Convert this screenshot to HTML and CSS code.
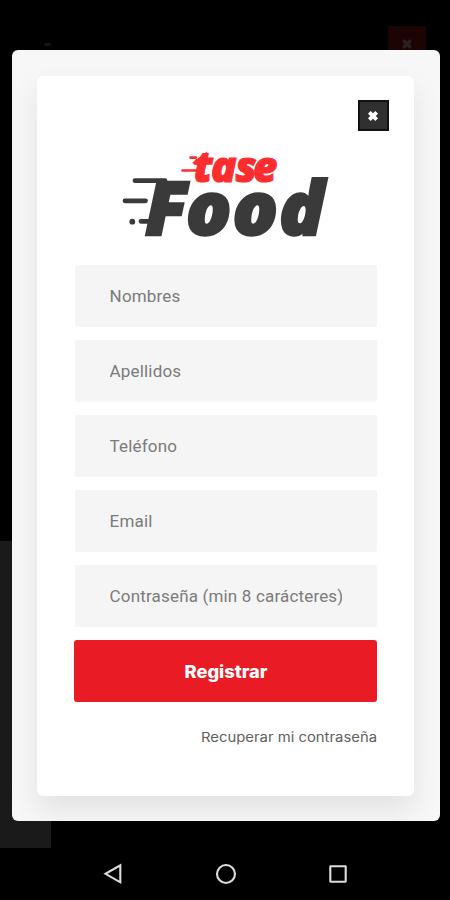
FILE: index.html
```html
<!DOCTYPE html>
<html lang="es">
<head>
<meta charset="utf-8">
<title>Tase Food</title>
<link rel="stylesheet" href="styles.css">
</head>
<body>
<div class="screen">
  <div class="backdrop-panel"></div>
  <div class="backdrop-mark"></div>
  <div class="backdrop-close">
    <svg width="12" height="12" viewBox="0 0 12 12"><path d="M2.3 2.3 9.7 9.7M9.7 2.3 2.3 9.7" stroke="#2c2021" stroke-width="3.4"/></svg>
  </div>
  <main class="modal">
    <form class="card">
      <button class="close" type="button" aria-label="Cerrar">
        <svg width="12" height="12" viewBox="0 0 12 12"><path d="M2.3 2.3 9.7 9.7M9.7 2.3 2.3 9.7" stroke="#fff" stroke-width="3.8"/></svg>
      </button>
      <svg class="logo" viewBox="110 140 230 110" width="230" height="110">
        <g stroke="#3a3a3b" stroke-width="4.8" stroke-linecap="round">
          <path d="M135 180.7H165M125 200.8H145.5M141 221.3H152"/>
        </g>
        <circle cx="132.3" cy="221.7" r="2.9" fill="#3a3a3b"/>
        <text class="food" x="145 186 232.5 279" y="234.5">Food</text>
        <path d="M192 163 207 151.5 205 164 199 166Z" fill="#fc2d2f"/>
        <path d="M190.5 157.6H196M182.5 170.5H197" stroke="#fc2d2f" stroke-width="2.6" stroke-linecap="round"/>
        <text class="tase" x="193.5 211 235.5 253" y="181.5">tase</text>
      </svg>
      <div class="fields">
        <input type="text" placeholder="Nombres">
        <input type="text" placeholder="Apellidos">
        <input type="text" placeholder="Teléfono">
        <input type="text" placeholder="Email">
        <input type="text" placeholder="Contraseña (min 8 carácteres)">
      </div>
      <button class="submit" type="button"><svg width="84" height="26" viewBox="0 0 84 26"><text x="0.5" y="19.5" textLength="83" lengthAdjust="spacingAndGlyphs">Registrar</text></svg></button>
      <a class="recover"><svg width="176" height="22" viewBox="0 0 176 22"><text x="0" y="16.5" textLength="176" lengthAdjust="spacingAndGlyphs">Recuperar mi contraseña</text></svg></a>
    </form>
  </main>
  <nav class="navbar">
    <svg width="22" height="22" viewBox="0 0 22 22"><path d="M18.3 2.3V19.3L3.5 10.8Z"/></svg>
    <svg width="22" height="22" viewBox="0 0 22 22"><circle cx="11" cy="11" r="9"/></svg>
    <svg width="22" height="22" viewBox="0 0 22 22"><rect x="3.3" y="3.3" width="15.4" height="15.4" rx=".4"/></svg>
  </nav>
</div>
</body>
</html>
```
FILE: styles.css
```css
* { box-sizing: border-box; }
body { margin: 0; background: #000; }
svg { display: block; }
.screen {
  position: relative;
  width: 450px;
  height: 900px;
  display: flex;
  flex-direction: column;
  overflow: hidden;
  background: #000;
}
.backdrop-panel {
  position: absolute;
  left: 0;
  top: 541px;
  width: 51px;
  height: 307px;
  background: #1a1a1a;
  border-top-right-radius: 18px;
}
.backdrop-mark {
  position: absolute;
  left: 44px;
  top: 43px;
  width: 7px;
  height: 3px;
  border-radius: 2px;
  background: #151515;
}
.backdrop-close {
  position: absolute;
  left: 388px;
  top: 26px;
  width: 38px;
  height: 38px;
  display: grid;
  place-items: center;
  padding-bottom: 2px;
  background: #1c0405;
}
.modal {
  position: relative;
  width: 428px;
  height: 771px;
  margin: 50px 0 0 11.6px;
  padding: 26px 25px 25px;
  border-radius: 6px;
  background: #f7f7f7;
  overflow: hidden;
}
.card {
  height: 720px;
  width: 377px;
  padding: 24px 37px 0 38px;
  display: flex;
  flex-direction: column;
  border-radius: 6px;
  background: #fff;
  box-shadow: 0 14px 30px rgba(0, 0, 0, .085);
}
.close {
  align-self: flex-end;
  width: 31px;
  height: 31px;
  margin-right: -12px;
  padding: 0;
  display: grid;
  place-items: center;
  border: 2px solid #111;
  background: #303030;
}
.logo { margin: 9px 0 15.4px 35.4px; flex: none; overflow: visible; }
.logo text {
  font-family: "Open Sans", sans-serif;
  font-weight: 800;
  font-style: italic;
}
.food { font-size: 75px; fill: #3a3a3b; stroke: #3a3a3b; stroke-width: 2.4px; }
.tase { font-size: 42px; fill: #fc2d2f; stroke: #fc2d2f; stroke-width: 1.2px; }
.fields { display: grid; gap: 13px; }
input {
  width: 302px;
  height: 62px;
  padding: 0 35px;
  border: 0;
  border-radius: 2px;
  background: #f5f5f5;
  font: 17px Roboto, sans-serif;
  letter-spacing: .17px;
}
input::placeholder { color: #7b7b7b; opacity: 1; }
.submit {
  width: 303px;
  height: 62px;
  margin: 13px 0 0 -.6px;
  padding: 0;
  display: grid;
  place-items: center;
  border: 0;
  border-radius: 3px;
  background: #e91b24;
}
.submit text {
  font: 800 17px Inter, "Open Sans", sans-serif;
  fill: #fff;
}
.recover { align-self: flex-end; margin-top: 23px; }
.recover text {
  font: 400 13px Inter, "Open Sans", sans-serif;
  fill: #606060;
}
.navbar {
  height: 52px;
  margin-top: 27px;
  padding: 0 101px 0 102px;
  display: flex;
  justify-content: space-between;
  align-items: center;
  background: #000;
}
.navbar svg { fill: none; stroke: #ddd; stroke-width: 2.1; }
```
